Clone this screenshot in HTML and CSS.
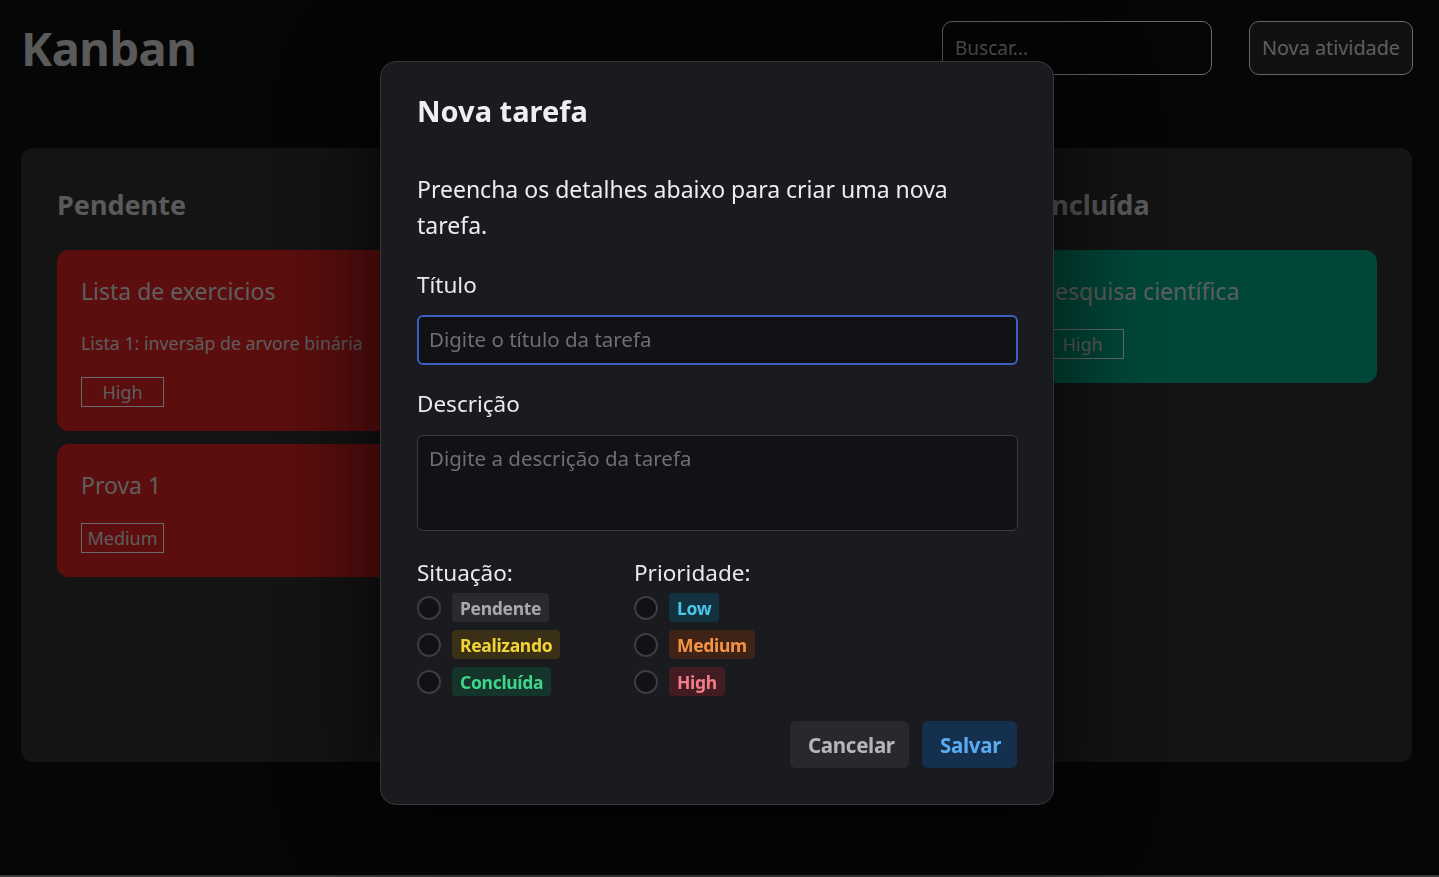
FILE: index.html
```html
<!DOCTYPE html>
<html lang="pt-BR">
<head>
<meta charset="utf-8">
<title>Kanban</title>
<link rel="stylesheet" href="styles.css">
</head>
<body>
<div class="page">
  <header class="topbar">
    <h1 class="brand">Kanban</h1>
    <div class="actions">
      <input class="search" type="text" placeholder="Buscar...">
      <button class="btn-new" type="button">Nova atividade</button>
    </div>
  </header>
  <main class="board">
    <section class="column">
      <h2 class="col-title">Pendente</h2>
      <article class="card card-red">
        <h3 class="card-title">Lista de exercicios</h3>
        <p class="card-desc">Lista 1: inversãp de arvore binária</p>
        <span class="tag">High</span>
      </article>
      <article class="card card-red">
        <h3 class="card-title">Prova 1</h3>
        <span class="tag">Medium</span>
      </article>
    </section>
    <section class="column">
      <h2 class="col-title">Realizando</h2>
    </section>
    <section class="column">
      <h2 class="col-title">Concluída</h2>
      <article class="card card-green">
        <h3 class="card-title">Pesquisa científica</h3>
        <span class="tag">High</span>
      </article>
    </section>
  </main>
</div>

<div class="overlay">
  <div class="modal" role="dialog">
    <h2 class="modal-title">Nova tarefa</h2>
    <p class="modal-text">Preencha os detalhes abaixo para criar uma nova tarefa.</p>
    <label class="field-label label-first" for="t">Título</label>
    <input id="t" class="field field-focus" type="text" placeholder="Digite o título da tarefa">
    <label class="field-label" for="d">Descrição</label>
    <textarea id="d" class="field field-area" placeholder="Digite a descrição da tarefa"></textarea>
    <div class="options">
      <div class="group">
        <div class="group-label">Situação:</div>
        <label class="opt"><span class="radio"></span><span class="badge b-gray">Pendente</span></label>
        <label class="opt"><span class="radio"></span><span class="badge b-yellow">Realizando</span></label>
        <label class="opt"><span class="radio"></span><span class="badge b-green">Concluída</span></label>
      </div>
      <div class="group">
        <div class="group-label">Prioridade:</div>
        <label class="opt"><span class="radio"></span><span class="badge b-cyan">Low</span></label>
        <label class="opt"><span class="radio"></span><span class="badge b-orange">Medium</span></label>
        <label class="opt"><span class="radio"></span><span class="badge b-red">High</span></label>
      </div>
    </div>
    <div class="footer">
      <button class="btn btn-cancel" type="button">Cancelar</button>
      <button class="btn btn-save" type="button">Salvar</button>
    </div>
  </div>
</div>
</body>
</html>
```

FILE: styles.css
```css
* { box-sizing: border-box; }
html, body { margin: 0; padding: 0; }
body {
  background: #0c0c0c;
  font-family: "Noto Sans", "Open Sans", sans-serif;
  overflow: hidden;
}
.page {
  height: 877px;
  border-bottom: 2px solid #6e6e6e;
  padding: 21px 26px 0 21px;
}
.topbar {
  display: flex;
  justify-content: space-between;
  align-items: flex-start;
  height: 127px;
}
.brand {
  margin: 0;
  font-size: 47px;
  line-height: 54px;
  font-weight: 700;
  color: #b4b4b4;
  letter-spacing: -0.5px;
}
.actions { display: flex; gap: 37px; }
.search {
  width: 270px;
  height: 54px;
  background: #0c0c0c;
  border: 1px solid #d0d0d0;
  border-radius: 10px;
  padding: 0 12px;
  font: 19px "Noto Sans", sans-serif;
  color: #ddd;
}
.search::placeholder { color: #b8b8b8; }
.btn-new {
  width: 164px;
  height: 54px;
  background: #222;
  border: 1px solid #d0d0d0;
  border-radius: 10px;
  font: 19.8px "Noto Sans", sans-serif;
  color: #bcbcbc;
  padding: 0 0 2px;
}
.board {
  width: 1391px;
  height: 614px;
  background: #282828;
  border-radius: 12px;
  padding: 36px 35px 0 36px;
  display: grid;
  grid-template-columns: 360px 360px 360px;
  justify-content: space-between;
  align-items: start;
}
.column { display: flex; flex-direction: column; gap: 13px; }
.col-title {
  margin: 0 0 11px 0;
  font-size: 27px;
  line-height: 42px;
  font-weight: 700;
  color: #b4b4b4;
}
.card {
  border-radius: 12px;
  padding: 24px;
  color: #bcbcbc;
}
.card-red { background: #b81c1c; }
.card-green { background: #008e72; }
.card-title {
  margin: 0;
  font-size: 23px;
  line-height: 34px;
  font-weight: 400;
}
.card-desc {
  margin: 23px 0 0;
  font-size: 17.8px;
  line-height: 24px;
}
.tag {
  display: inline-flex;
  align-items: center;
  justify-content: center;
  width: 83px;
  height: 30px;
  margin-top: 21px;
  border: 1px solid #d4d4d4;
  font-size: 18px;
  line-height: 1;
}
.card-desc + .tag { margin-top: 22px; }

.overlay {
  position: fixed;
  inset: 0;
  background: rgba(0, 0, 0, 0.5);
  display: flex;
  justify-content: center;
  align-items: flex-start;
  padding: 61px 5px 0 0;
}
.modal {
  width: 674px;
  height: 744px;
  background: #1a1b1e;
  border: 1px solid #35363a;
  border-radius: 16px;
  padding: 28px 36px 0 36px;
  color: #e9eaec;
  box-shadow: 0 10px 90px 20px rgba(0, 0, 0, 0.55);
  display: flex;
  flex-direction: column;
}
.modal-title {
  margin: 0;
  font-size: 29px;
  line-height: 42px;
  font-weight: 700;
  color: #eeeff1;
}
.modal-text {
  margin: 39px 0 0;
  max-width: 580px;
  font-size: 23px;
  line-height: 36px;
  color: #eceded;
}
.field-label {
  display: block;
  margin-top: 12px;
  font-size: 22.5px;
  line-height: 34px;
  color: #e9eaec;
}
.label-first { margin-top: 25px; }
.field {
  display: block;
  width: 601px;
  margin-top: 13px;
  background: #111215;
  border: 1px solid #3a3c40;
  border-radius: 6px;
  padding: 0 10px 2px;
  font: 20.5px "Noto Sans", sans-serif;
  color: #e9eaec;
  outline: none;
}
.field::placeholder { color: #6d6f75; }
.field-focus {
  height: 50px;
  border: 2px solid #3d5fbf;
  margin-bottom: 10px;
}
.field-area {
  height: 96px;
  resize: none;
  padding: 7px 11px;
  line-height: 30px;
  margin-top: 14px;
}
.options {
  display: flex;
  margin-top: 28px;
}
.group { width: 217px; display: flex; flex-direction: column; gap: 8px; }
.group-label {
  font-size: 22.5px;
  line-height: 28px;
  color: #e9eaec;
  margin-bottom: -2px;
}
.opt { display: flex; align-items: center; gap: 11px; height: 29px; }
.radio {
  width: 24px;
  height: 24px;
  border-radius: 50%;
  border: 2px solid #3b3d42;
  background: #111215;
  flex: none;
}
.badge {
  display: inline-flex;
  align-items: center;
  height: 29px;
  padding: 0 8px;
  border-radius: 4px;
  font-size: 17.5px;
  font-weight: 700;
  letter-spacing: -0.3px;
}
.b-gray { background: #2a2b30; color: #a8a9ae; }
.b-yellow { background: #3a3016; color: #f3d438; }
.b-green { background: #15342a; color: #3fd68c; }
.b-cyan { background: #11323e; color: #4bc6e8; }
.b-orange { background: #3e2316; color: #f59346; }
.b-red { background: #431b23; color: #f27c88; }
.footer {
  display: flex;
  justify-content: flex-end;
  gap: 13px;
  margin-top: 25px;
}
.btn {
  height: 47px;
  border: none;
  border-radius: 6px;
  font: 700 20.5px "Noto Sans", sans-serif;
  padding: 0 18px;
  letter-spacing: -0.3px;
}
.btn-cancel { background: #28292d; color: #b5b6ba; width: 119px; }
.btn-save { background: #15304f; color: #5aabf0; width: 95px; }
```
